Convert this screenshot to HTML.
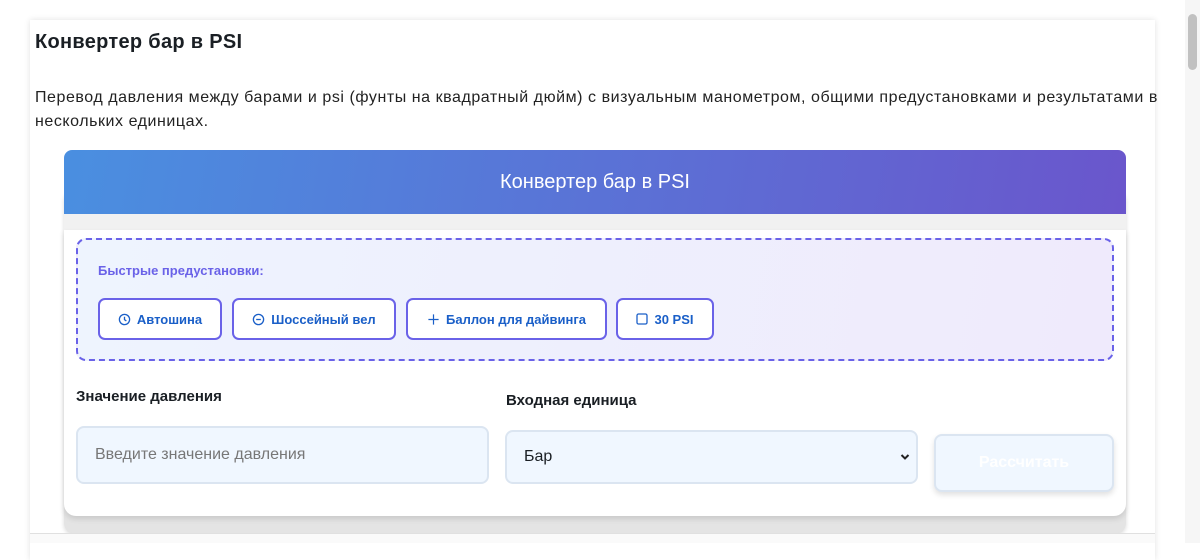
<!DOCTYPE html>
<html><head><meta charset="utf-8"><style>
*{box-sizing:border-box}
body{margin:0;width:1200px;height:543px;overflow:hidden;background:#fff;font-family:"Liberation Sans",sans-serif;color:#1f2328;position:relative}
.outer{position:absolute;left:30px;top:20px;width:1125px;height:540px;background:#fff;box-shadow:0 0 6px rgba(0,0,0,.12)}
h1{position:absolute;left:35px;top:31px;margin:0;font-size:20px;font-weight:bold;color:#1a1f24;letter-spacing:.3px}
.desc{position:absolute;left:35px;top:86px;width:1130px;font-size:16px;line-height:24px;color:#222;letter-spacing:.55px}
.grey{position:absolute;left:64px;top:190px;width:1062px;height:343px;background:#e4e4e4;border-radius:10px;box-shadow:0 2px 4px rgba(0,0,0,.15)}
.hdr{position:absolute;left:64px;top:150px;width:1062px;height:64px;border-radius:8px 8px 0 0;background:linear-gradient(100deg,#4a8fe0,#6a56cc);color:#fff;font-size:20px;text-align:center;line-height:64px}
.strip{position:absolute;left:64px;top:214px;width:1062px;height:16px;background:#f1f1f1}
.panel{position:absolute;left:64px;top:230px;width:1062px;height:286px;background:#fff;border-radius:0 0 12px 12px;box-shadow:0 3px 6px rgba(0,0,0,.12)}
.presets{position:absolute;left:76px;top:238px;width:1038px;height:123px;border:2px dashed #6a62e8;border-radius:10px;background:linear-gradient(100deg,#eef4fe,#efeafc)}
.pl{position:absolute;left:98px;top:263px;font-size:13px;font-weight:bold;color:#6a62e8}
.btn{position:absolute;top:298px;height:42px;border:2px solid #6a62e8;border-radius:7px;background:#fff;color:#1a5fc8;font-size:13px;font-weight:bold;display:flex;align-items:center;justify-content:center;gap:6px}
.lbl{position:absolute;font-size:15px;font-weight:bold;color:#1a1f24}
.inp{position:absolute;border:2px solid #dbe5f1;border-radius:8px;background:#f0f7ff;font-size:16px;display:flex;align-items:center;padding-left:17px}
.calc{position:absolute;left:934px;top:434px;width:180px;height:58px;border:2px solid #dbe5f1;border-radius:8px;background:#f0f7ff;box-shadow:0 3px 6px rgba(0,0,0,.12);color:#fff;font-weight:bold;font-size:16px;display:flex;align-items:center;justify-content:center}
.bline{position:absolute;left:30px;top:533px;width:1125px;height:10px;background:#fafafa;border-top:1px solid #e0e0e0}
.sb{position:absolute;right:0;top:0;width:15px;height:543px;background:#f6f6f6}
.sb div{position:absolute;left:3px;top:14px;width:9px;height:56px;background:#c1c1c1;border-radius:5px}
</style></head><body>
<div class="outer"></div>
<h1>Конвертер бар в PSI</h1>
<div class="desc">Перевод давления между барами и psi (фунты на квадратный дюйм) с визуальным манометром, общими предустановками и результатами в нескольких единицах.</div>
<div class="grey"></div>
<div class="hdr">Конвертер бар в PSI</div>
<div class="strip"></div>
<div class="panel"></div>
<div class="presets"></div>
<div class="pl">Быстрые предустановки:</div>
<div class="btn" style="left:98px;width:124px"><svg width="13" height="13" viewBox="0 0 14 14"><circle cx="7" cy="7" r="5.5" fill="none" stroke="#1a5fc8" stroke-width="1.4"/><path d="M7 4v3.2l2 1.3" fill="none" stroke="#1a5fc8" stroke-width="1.4"/></svg>Автошина</div>
<div class="btn" style="left:232px;width:164px"><svg width="13" height="13" viewBox="0 0 14 14"><circle cx="7" cy="7" r="5.5" fill="none" stroke="#1a5fc8" stroke-width="1.4"/><path d="M4.5 7h5" stroke="#1a5fc8" stroke-width="1.4"/></svg>Шоссейный вел</div>
<div class="btn" style="left:406px;width:201px"><svg width="13" height="13" viewBox="0 0 14 14"><path d="M7 1.5v11M1.5 7h11" stroke="#1a5fc8" stroke-width="1.3"/></svg>Баллон для дайвинга</div>
<div class="btn" style="left:616px;width:98px"><svg width="12" height="12" viewBox="0 0 12 12"><rect x="1" y="1" width="10" height="10" rx="1.5" fill="none" stroke="#1a5fc8" stroke-width="1.3"/></svg>30 PSI</div>
<div class="lbl" style="left:76px;top:388px">Значение давления</div>
<div class="lbl" style="left:506px;top:392px">Входная единица</div>
<div class="inp" style="left:76px;top:426px;width:413px;height:58px;color:#777">Введите значение давления</div>
<div class="inp" style="left:505px;top:430px;width:413px;height:54px;color:#1a1f24;justify-content:space-between;padding-right:6px">Бар<svg width="10" height="8" viewBox="0 0 10 8"><path d="M1.5 2l3.5 3.5L8.5 2" fill="none" stroke="#222" stroke-width="2"/></svg></div>
<div class="calc">Рассчитать</div>
<div class="bline"></div>
<div class="sb"><div></div></div>
</body></html>
